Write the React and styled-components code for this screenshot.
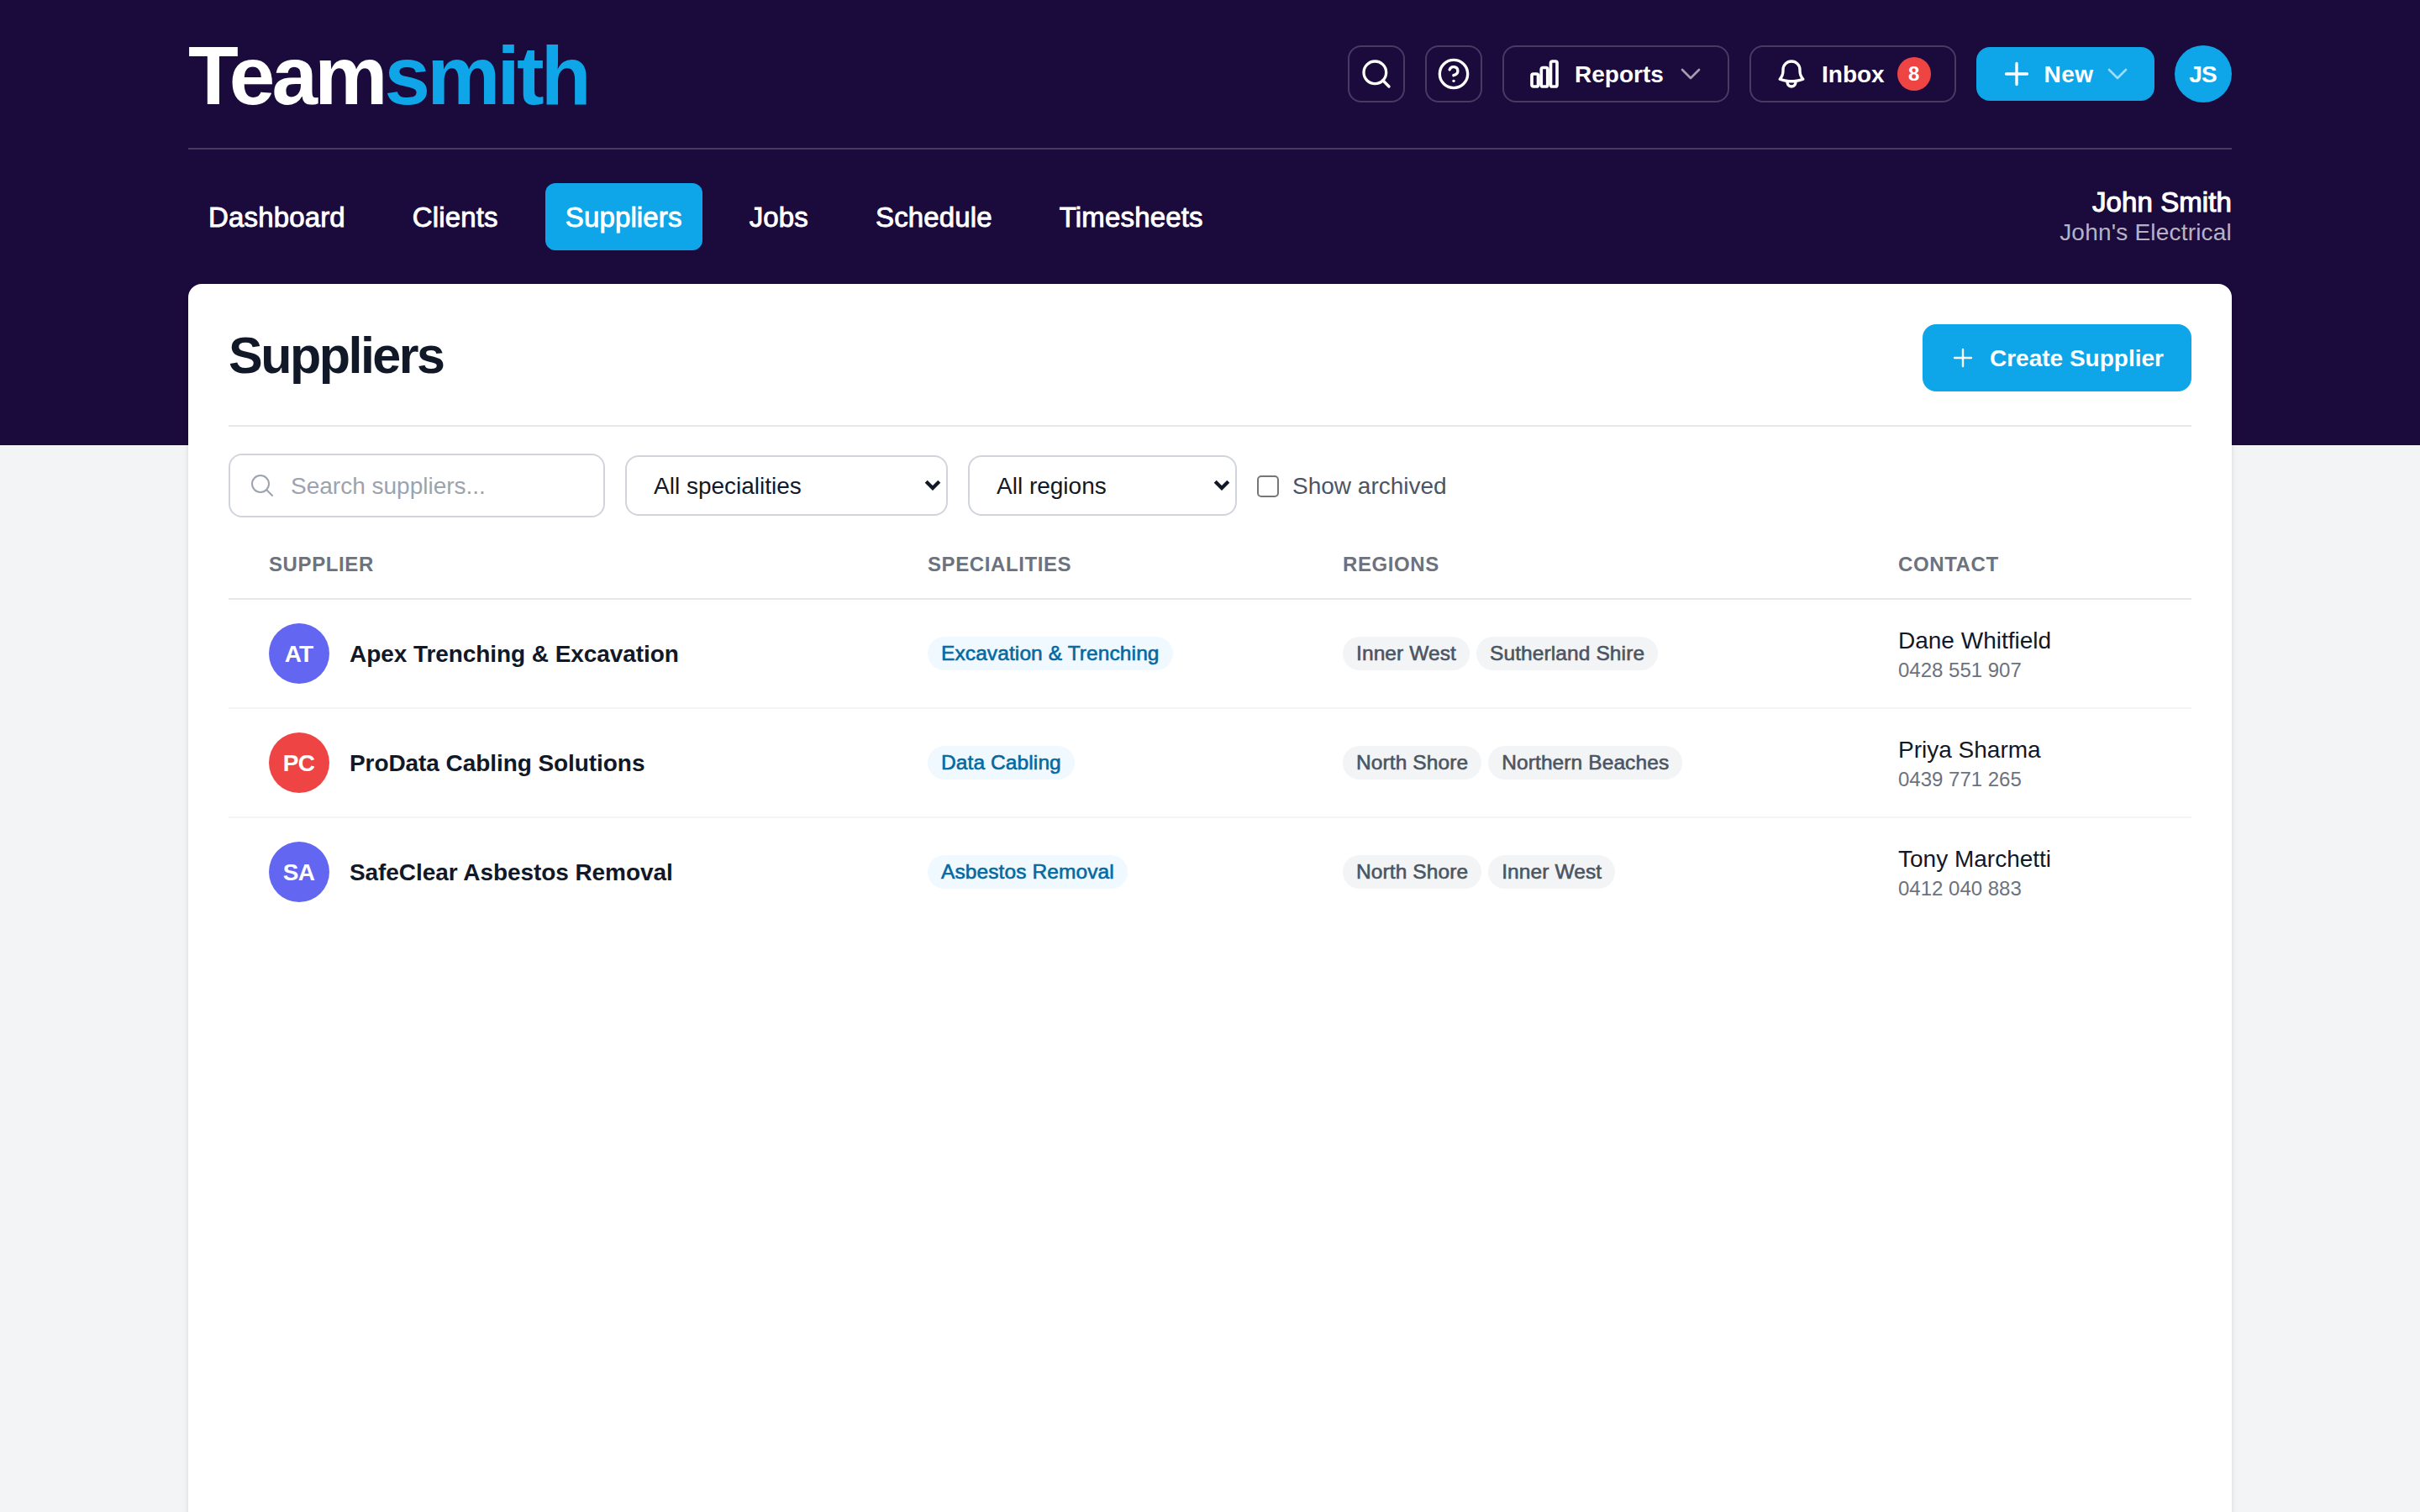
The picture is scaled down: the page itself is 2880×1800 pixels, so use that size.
import React from 'react';
import styled, { createGlobalStyle } from 'styled-components';

const GlobalStyle = createGlobalStyle`
  *, *::before, *::after { box-sizing: border-box; }
  html, body { margin: 0; padding: 0; }
  body {
    font-family: 'Liberation Sans', Arial, sans-serif;
    font-size: 28px;
    line-height: 40px;
    color: #111827;
    overflow: hidden;
  }
  button, input { font: inherit; color: inherit; }
`;

const Page = styled.div`
  height: 1800px;
  overflow: hidden;
  background: linear-gradient(#1b0a3c 530px, #f3f4f6 530px);
`;

const Container = styled.div`
  width: 2432px;
  margin: 0 auto;
`;

const TopBar = styled.header`
  display: flex;
  align-items: center;
  justify-content: space-between;
  height: 178px;
  border-bottom: 2px solid rgba(255, 255, 255, 0.2);
`;

const Logo = styled.div`
  color: #fff;
  font-size: 98px;
  line-height: 96px;
  font-weight: 700;
  letter-spacing: -3.8px;
  padding-top: 4px;

  span { color: #0ea5e9; }
`;

const Actions = styled.div`
  display: flex;
  align-items: center;
  gap: 24px;
`;

const Label = styled.span`
  padding-top: 2px;
`;

const OutlineButton = styled.button`
  display: flex;
  align-items: center;
  justify-content: ${(p) => (p.$square ? 'center' : 'flex-start')};
  gap: 16px;
  width: ${(p) => p.$width || 68}px;
  height: 68px;
  padding: 0 ${(p) => (p.$square ? 0 : 28)}px;
  color: #fff;
  font-weight: 700;
  background: transparent;
  border: 2px solid rgba(255, 255, 255, 0.2);
  border-radius: 16px;
`;

const NewButton = styled.button`
  display: flex;
  align-items: center;
  justify-content: space-between;
  width: 212px;
  height: 64px;
  padding: 0 28px;
  color: #fff;
  font-weight: 700;
  letter-spacing: 0.4px;
  background: #0ea5e9;
  border: 0;
  border-radius: 16px;
`;

const CountBadge = styled.span`
  flex: none;
  width: 40px;
  height: 40px;
  margin-left: -1px;
  border-radius: 50%;
  background: #ef4444;
  font-size: 24px;
  text-align: center;
`;

const Avatar = styled.div`
  flex: none;
  display: flex;
  align-items: center;
  justify-content: center;
  width: ${(p) => p.$size}px;
  height: ${(p) => p.$size}px;
  padding: 1px 1px 0 0;
  border-radius: 50%;
  background: ${(p) => p.$color};
  color: #fff;
  font-size: 28px;
  font-weight: 700;
  letter-spacing: -0.8px;
`;

const NavRow = styled.div`
  display: flex;
  align-items: center;
  justify-content: space-between;
  height: 160px;
`;

const Nav = styled.nav`
  display: flex;
  gap: 32px;
`;

const NavItem = styled.a`
  padding: 21px 24px 19px;
  border-radius: 12px;
  color: #fff;
  font-size: 33px;
  letter-spacing: 0.15px;
  -webkit-text-stroke: 0.9px currentColor;
  background: ${(p) => (p.$active ? '#0ea5e9' : 'transparent')};
`;

const Account = styled.div`
  padding-top: 2px;
  text-align: right;
  line-height: 36px;
  color: rgba(255, 255, 255, 0.7);
  letter-spacing: 0.2px;

  strong {
    display: block;
    color: #fff;
    font-size: 33px;
    font-weight: 400;
    letter-spacing: 0.1px;
    -webkit-text-stroke: 1.1px currentColor;
  }
`;

const Card = styled.main`
  min-height: 1500px;
  padding: 48px;
  background: #fff;
  border-radius: 16px;
  box-shadow: 0 2px 6px rgba(0, 0, 0, 0.1), 0 2px 4px -2px rgba(0, 0, 0, 0.1);
`;

const CardHeader = styled.div`
  display: flex;
  align-items: center;
  justify-content: space-between;
  padding-bottom: 40px;
  border-bottom: 2px solid #e5e7eb;
`;

const Title = styled.h1`
  margin: 0;
  padding-bottom: 7px;
  font-size: 61px;
  line-height: 72px;
  font-weight: 700;
  letter-spacing: -2.5px;
`;

const CreateButton = styled.button`
  display: flex;
  align-items: center;
  gap: 16px;
  width: 320px;
  height: 80px;
  padding: 0 32px;
  color: #fff;
  font-weight: 700;
  white-space: nowrap;
  background: #0ea5e9;
  border: 0;
  border-radius: 16px;
`;

const Filters = styled.div`
  display: flex;
  align-items: center;
  gap: 24px;
  margin-top: 32px;
`;

const SearchField = styled.label`
  display: flex;
  align-items: center;
  gap: 18px;
  width: 448px;
  height: 76px;
  padding: 0 22px;
  color: #9ca3af;
  border: 2px solid #d1d5db;
  border-radius: 16px;

  input {
    min-width: 0;
    flex: 1;
    padding: 2px 0 0;
    border: 0;
    outline: 0;
    background: none;
  }
  input::placeholder { color: #9ca3af; opacity: 1; }
`;

const Select = styled.button`
  display: flex;
  align-items: center;
  justify-content: space-between;
  width: ${(p) => p.$width}px;
  height: 72px;
  padding: 0 6px 0 32px;
  background: #fff;
  border: 2px solid #d1d5db;
  border-radius: 16px;
`;

const CheckLabel = styled.label`
  display: flex;
  align-items: center;
  gap: 16px;
  color: #4b5563;

  input {
    appearance: none;
    width: 26px;
    height: 26px;
    margin: 2px 0 0;
    border: 2px solid #767676;
    border-radius: 5px;
  }
`;

const Row = styled.div`
  display: grid;
  grid-template-columns: 784px 494px 661px 1fr;
  align-items: center;
  height: 130px;
  padding-left: 48px;
  border-bottom: 2px solid #f3f4f6;

  &:last-child { border-bottom-color: transparent; }
`;

const HeadRow = styled(Row)`
  height: 82px;
  margin-top: 16px;
  padding-bottom: 1px;
  color: #6b7280;
  font-size: 24px;
  font-weight: 700;
  letter-spacing: 0.6px;
  text-transform: uppercase;
  border-bottom-color: #e5e7eb;
`;

const Supplier = styled.div`
  display: flex;
  align-items: center;
  gap: 24px;
  font-weight: 700;
  letter-spacing: -0.07px;
`;

const Tags = styled.div`
  display: flex;
  gap: 8px;
`;

const Tag = styled.span`
  padding: 0 16px;
  border-radius: 20px;
  font-size: 24.5px;
  letter-spacing: 0.1px;
  -webkit-text-stroke: 0.6px currentColor;
  color: ${(p) => (p.$blue ? '#0369a1' : '#4b5563')};
  background: ${(p) => (p.$blue ? '#f0f9ff' : '#f3f4f6')};
`;

const Contact = styled.div`
  padding-top: 3px;
  line-height: 36px;

  small {
    display: block;
    font-size: 24px;
    line-height: 34px;
    color: #6b7280;
  }
`;

const Icon = ({ size = 40, stroke = 2, opacity, children }) => (
  <svg
    width={size}
    height={size}
    viewBox="0 0 24 24"
    fill="none"
    stroke="currentColor"
    strokeWidth={stroke}
    strokeLinecap="round"
    strokeLinejoin="round"
    opacity={opacity}
  >
    {children}
  </svg>
);

const Chevron = () => (
  <Icon size={32} opacity={0.6}>
    <path d="m19.5 8.25-7.5 7.5-7.5-7.5" />
  </Icon>
);

const Plus = (props) => (
  <Icon {...props}>
    <path d="M12 4.5v15m7.5-7.5h-15" />
  </Icon>
);

const SelectArrow = () => (
  <svg width="20" height="14" viewBox="0 0 20 14" fill="none" stroke="currentColor" strokeWidth="4.2">
    <path d="M2.2 2.2 10 10l7.8-7.8" />
  </svg>
);

const navItems = ['Dashboard', 'Clients', 'Suppliers', 'Jobs', 'Schedule', 'Timesheets'];

const suppliers = [
  {
    initials: 'AT',
    color: '#6366f1',
    name: 'Apex Trenching & Excavation',
    specialities: ['Excavation & Trenching'],
    regions: ['Inner West', 'Sutherland Shire'],
    contact: 'Dane Whitfield',
    phone: '0428 551 907',
  },
  {
    initials: 'PC',
    color: '#ef4444',
    name: 'ProData Cabling Solutions',
    specialities: ['Data Cabling'],
    regions: ['North Shore', 'Northern Beaches'],
    contact: 'Priya Sharma',
    phone: '0439 771 265',
  },
  {
    initials: 'SA',
    color: '#6366f1',
    name: 'SafeClear Asbestos Removal',
    specialities: ['Asbestos Removal'],
    regions: ['North Shore', 'Inner West'],
    contact: 'Tony Marchetti',
    phone: '0412 040 883',
  },
];

const Header = () => (
  <>
    <TopBar>
      <Logo>Team<span>smith</span></Logo>
      <Actions>
        <OutlineButton $square aria-label="Search">
          <Icon>
            <circle cx="11" cy="11" r="8" />
            <path d="m21 21-4.35-4.35" />
          </Icon>
        </OutlineButton>
        <OutlineButton $square aria-label="Help">
          <Icon>
            <circle cx="12" cy="12" r="10" />
            <path d="M9.09 9a3 3 0 0 1 5.83 1c0 2-3 3-3 3" />
            <path d="M12 17h.01" />
          </Icon>
        </OutlineButton>
        <OutlineButton $width={270}>
          <Icon stroke={2.2}>
            <path d="M3 13.125C3 12.504 3.504 12 4.125 12h2.25c.621 0 1.125.504 1.125 1.125v6.75C7.5 20.496 6.996 21 6.375 21h-2.25A1.125 1.125 0 0 1 3 19.875v-6.75ZM9.75 8.625c0-.621.504-1.125 1.125-1.125h2.25c.621 0 1.125.504 1.125 1.125v11.25c0 .621-.504 1.125-1.125 1.125h-2.25a1.125 1.125 0 0 1-1.125-1.125V8.625ZM16.5 4.125c0-.621.504-1.125 1.125-1.125h2.25C20.496 3 21 3.504 21 4.125v15.75c0 .621-.504 1.125-1.125 1.125h-2.25a1.125 1.125 0 0 1-1.125-1.125V4.125Z" />
          </Icon>
          <Label>Reports</Label>
          <Chevron />
        </OutlineButton>
        <OutlineButton $width={246}>
          <Icon>
            <path d="M14.857 17.082a23.848 23.848 0 0 0 5.454-1.31A8.967 8.967 0 0 1 18 9.75V9A6 6 0 0 0 6 9v.75a8.967 8.967 0 0 1-2.312 6.022c1.733.64 3.56 1.085 5.455 1.31m5.714 0a24.255 24.255 0 0 1-5.714 0m5.714 0a3 3 0 1 1-5.714 0" />
          </Icon>
          <Label>Inbox</Label>
          <CountBadge>8</CountBadge>
        </OutlineButton>
        <NewButton>
          <Plus />
          <Label>New</Label>
          <Chevron />
        </NewButton>
        <Avatar $size={68} $color="#0ea5e9">JS</Avatar>
      </Actions>
    </TopBar>
    <NavRow>
      <Nav>
        {navItems.map((item) => (
          <NavItem key={item} $active={item === 'Suppliers'}>{item}</NavItem>
        ))}
      </Nav>
      <Account>
        <strong>John Smith</strong>
        John's Electrical
      </Account>
    </NavRow>
  </>
);

const SupplierRow = ({ initials, color, name, specialities, regions, contact, phone }) => (
  <Row>
    <Supplier>
      <Avatar $size={72} $color={color}>{initials}</Avatar>
      <Label>{name}</Label>
    </Supplier>
    <Tags>
      {specialities.map((s) => <Tag key={s} $blue>{s}</Tag>)}
    </Tags>
    <Tags>
      {regions.map((r) => <Tag key={r}>{r}</Tag>)}
    </Tags>
    <Contact>
      {contact}
      <small>{phone}</small>
    </Contact>
  </Row>
);

const App = () => (
  <Page>
    <GlobalStyle />
    <Container>
      <Header />
      <Card>
        <CardHeader>
          <Title>Suppliers</Title>
          <CreateButton>
            <Plus size={32} stroke={1.8} />
            <Label>Create Supplier</Label>
          </CreateButton>
        </CardHeader>
        <Filters>
          <SearchField>
            <Icon size={32} stroke={1.5}>
              <path d="m21 21-5.197-5.197m0 0A7.5 7.5 0 1 0 5.196 5.196a7.5 7.5 0 0 0 10.607 10.607Z" />
            </Icon>
            <input type="text" placeholder="Search suppliers..." />
          </SearchField>
          <Select $width={384}>
            <Label>All specialities</Label>
            <SelectArrow />
          </Select>
          <Select $width={320}>
            <Label>All regions</Label>
            <SelectArrow />
          </Select>
          <CheckLabel>
            <input type="checkbox" />
            <Label>Show archived</Label>
          </CheckLabel>
        </Filters>
        <HeadRow>
          <div>Supplier</div>
          <div>Specialities</div>
          <div>Regions</div>
          <div>Contact</div>
        </HeadRow>
        <div>
          {suppliers.map((s) => <SupplierRow key={s.name} {...s} />)}
        </div>
      </Card>
    </Container>
  </Page>
);

export default App;
